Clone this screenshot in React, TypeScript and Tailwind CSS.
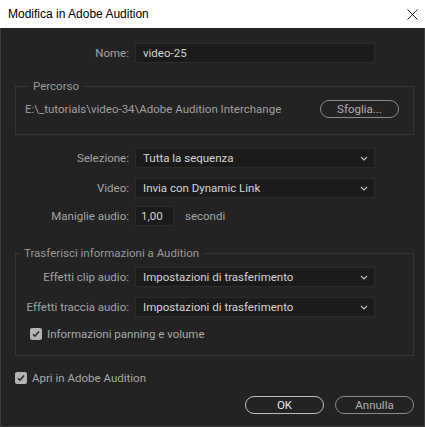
import { ReactNode } from "react";

const font = { fontFamily: 'Roboto, "Liberation Sans", Arial, sans-serif' };

function Chevron() {
  return (
    <svg width="8" height="5" viewBox="0 0 8 5" className="mr-[6px]">
      <path d="M1 1l3 3 3-3" fill="none" stroke="#bdbdbd" strokeWidth="1.2" />
    </svg>
  );
}

function Select({ value }: { value: string }) {
  return (
    <div className="flex h-[20px] w-[240px] items-center justify-between border border-[#2a2a2a] bg-[#1b1b1b] pl-[7px] text-[#d4d4d4]">
      <span>{value}</span>
      <Chevron />
    </div>
  );
}

function Row({ label, width, children, className = "" }: { label: string; width: string; children: ReactNode; className?: string }) {
  return (
    <div className={`flex items-center gap-[6px] ${className}`}>
      <span className={`${width} text-right text-[#a3a3a3]`}>{label}</span>
      {children}
    </div>
  );
}

function Check({ label, className = "" }: { label: string; className?: string }) {
  return (
    <div className={`flex items-center gap-[5px] ${className}`}>
      <span className="flex h-[12px] w-[12px] items-center justify-center rounded-[2px] bg-[#b4b4b4]">
        <svg width="10" height="10" viewBox="0 0 10 10">
          <path d="M2 5.2l2 2 4-4.6" fill="none" stroke="#2a2a2a" strokeWidth="1.6" />
        </svg>
      </span>
      <span className="text-[#a8a8a8]">{label}</span>
    </div>
  );
}

function PillButton({ label, bright }: { label: string; bright?: boolean }) {
  return (
    <button
      className={`flex h-[18px] w-[79px] items-center justify-center rounded-full border-[1.5px] ${
        bright ? "border-[#bdbdbd] text-[#e6e6e6]" : "border-[#8a8a8a] text-[#b0b0b0]"
      }`}
    >
      {label}
    </button>
  );
}

export default function App() {
  return (
    <div className="flex h-[427px] w-[425px] flex-col bg-white text-[11.5px] leading-[14px]" style={font}>
      <div
        className="flex h-[28px] items-center justify-between pl-[8px] pr-[7px] text-[12px] text-black"
        style={{ fontFamily: '"Liberation Sans", Arial, sans-serif' }}
      >
        <span>Modifica in Adobe Audition</span>
        <svg width="11" height="11" viewBox="0 0 11 11">
          <path d="M0.5 0.5l10 10M10.5 0.5l-10 10" stroke="#222" strokeWidth="1" />
        </svg>
      </div>

      <div className="flex flex-1 flex-col border-x border-b border-[#3c3c3c] bg-[#232323] pl-[14px] pr-[10px]">
        <Row label="Nome:" width="w-[114px]" className="mt-[15px]">
          <div className="flex h-[20px] w-[240px] items-center border border-[#2a2a2a] bg-[#1b1b1b] pl-[7px] text-[#d4d4d4]">
            video-25
          </div>
        </Row>

        <fieldset className="mt-[16px] border border-[#353535] pb-[16px] pl-[9px] pr-[14px]">
          <legend className="ml-[4px] px-[4px] text-[#9a9a9a]">Percorso</legend>
          <div className="mt-[7px] flex items-center justify-between">
            <span className="text-[#a0a0a0]">E:\_tutorials\video-34\Adobe Audition Interchange</span>
            <PillButton label="Sfoglia..." />
          </div>
        </fieldset>

        <Row label="Selezione:" width="w-[114px]" className="mt-[13px]">
          <Select value="Tutta la sequenza" />
        </Row>
        <Row label="Video:" width="w-[114px]" className="mt-[10px]">
          <Select value="Invia con Dynamic Link" />
        </Row>
        <Row label="Maniglie audio:" width="w-[114px]" className="mt-[8px]">
          <div className="flex h-[20px] w-[39px] items-center border border-[#2a2a2a] bg-[#1b1b1b] pl-[5px] text-[#d4d4d4]">
            1,00
          </div>
          <span className="ml-[5px] text-[#a3a3a3]">secondi</span>
        </Row>

        <fieldset className="mt-[20px] border border-[#353535] pb-[14px]">
          <legend className="ml-[4px] px-[4px] text-[#9a9a9a]">Trasferisci informazioni a Audition</legend>
          <Row label="Effetti clip audio:" width="w-[113px]" className="mt-[7px]">
            <Select value="Impostazioni di trasferimento" />
          </Row>
          <Row label="Effetti traccia audio:" width="w-[113px]" className="mt-[10px]">
            <Select value="Impostazioni di trasferimento" />
          </Row>
          <Check label="Informazioni panning e volume" className="ml-[14px] mt-[10px]" />
        </fieldset>

        <Check label="Apri in Adobe Audition" className="mt-[15px]" />

        <div className="mt-[11px] flex justify-end gap-[11px]">
          <PillButton label="OK" bright />
          <PillButton label="Annulla" />
        </div>
      </div>
    </div>
  );
}
